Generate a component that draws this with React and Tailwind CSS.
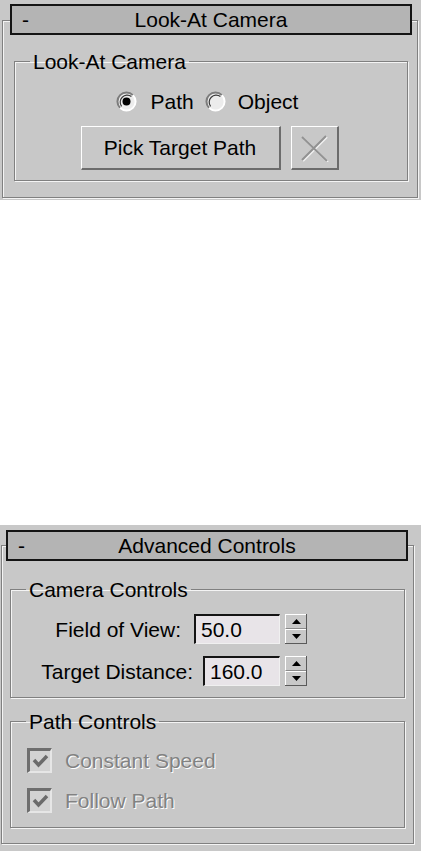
import React from "react";

const Header = ({ title, className }) => (
  <div
    className={`relative z-10 h-[31px] w-[402px] border-2 border-[#141414] bg-[#b4b4b4] grid grid-cols-[44px_1fr_44px] items-center ${className}`}
  >
    <span className="pl-[10px] leading-none">-</span>
    <span className="text-center leading-none">{title}</span>
    <span />
  </div>
);

const Group = ({ label, className, children }) => (
  <fieldset
    className={`border border-[#808080] shadow-[inset_1px_1px_0_#f4f4f4,1px_1px_0_#f4f4f4] ${className}`}
  >
    <legend className="ml-[15px] px-[3px] leading-[23px]">{label}</legend>
    {children}
  </fieldset>
);

const Radio = ({ checked }) => (
  <svg width="21" height="21" viewBox="0 0 21 21">
    <circle cx="10.5" cy="10.5" r="8.5" fill="#ececec" />
    <path d="M4.1 16.9 A9 9 0 0 1 16.9 4.1" fill="none" stroke="#7c7c7c" strokeWidth="2" />
    <path d="M5.6 15.4 A7 7 0 0 1 15.4 5.6" fill="none" stroke="#3a3a3a" strokeWidth="1.2" />
    <path d="M16.9 4.1 A9 9 0 0 1 4.1 16.9" fill="none" stroke="#ffffff" strokeWidth="2" />
    {checked && <circle cx="10.5" cy="10.5" r="4" fill="#000" />}
  </svg>
);

const Spinner = () => (
  <div className="w-[22px] h-[30px] flex flex-col border-r border-b border-[#5a5a5a]">
    <div className="flex-1 flex items-center justify-center border-t border-l border-t-white border-l-white border-b border-b-[#8a8a8a]">
      <svg width="9" height="5" viewBox="0 0 9 5">
        <path d="M4.5 0 L9 5 L0 5 Z" fill="#000" />
      </svg>
    </div>
    <div className="flex-1 flex items-center justify-center border-l border-l-white border-t border-t-white">
      <svg width="9" height="5" viewBox="0 0 9 5">
        <path d="M0 0 L9 0 L4.5 5 Z" fill="#000" />
      </svg>
    </div>
  </div>
);

const SpinRow = ({ label, value, inputW, gap }) => (
  <div className="flex items-center justify-end pr-[97px]">
    <span className="leading-none">{label}</span>
    <div
      className={`h-[30px] ${inputW} ${gap} flex items-center pl-[5px] bg-[#e8e4e8] border-t-2 border-l-2 border-t-[#141414] border-l-[#141414] border-b border-r border-b-[#f0f0f0] border-r-[#f0f0f0] leading-none`}
    >
      {value}
    </div>
    <div className="ml-[5px]">
      <Spinner />
    </div>
  </div>
);

const CheckRow = ({ label }) => (
  <div className="flex items-center h-[25px] pl-[16px]">
    <div className="w-[25px] h-[25px] flex items-center justify-center bg-[#d2d2d2] border-t-[3px] border-l-[3px] border-t-[#6e6e6e] border-l-[#6e6e6e] border-b-2 border-r-2 border-b-[#e6e6e6] border-r-[#e6e6e6]">
      <svg width="17" height="15" viewBox="0 0 17 15">
        <path d="M2 6 L6.5 11 L15 2" fill="none" stroke="#6a6a6a" strokeWidth="3.5" />
      </svg>
    </div>
    <span className="ml-[13px] leading-none text-[#828282] [text-shadow:1px_1px_0_#ffffff]">
      {label}
    </span>
  </div>
);

export default function App() {
  return (
    <div className="w-[421px] h-[851px] bg-white font-['Liberation_Sans',Arial,sans-serif] text-[21px] text-black">
      {/* Look-At Camera rollout */}
      <div className="h-[200px] bg-[#c8c8c8] pt-[4px]">
        <Header title="Look-At Camera" className="ml-[10px]" />
        <div className="ml-[2px] mt-[-15px] w-[416px] h-[178px] border border-[#808080] shadow-[inset_1px_1px_0_#f4f4f4,1px_1px_0_#f4f4f4] pt-[29px] pl-[11px]">
          <Group label="Look-At Camera" className="w-[394px] pb-[10px]">
            <div className="flex items-center justify-center h-[24px] mt-[16px] pr-[8px]">
              <Radio checked />
              <span className="ml-[14px] leading-none">Path</span>
              <span className="ml-[11px] flex">
                <Radio />
              </span>
              <span className="ml-[12px] leading-none">Object</span>
            </div>
            <div className="flex justify-center gap-[10px] mt-[13px] pr-[3px]">
              <div className="w-[200px] h-[44px] flex items-center justify-center border-t border-l border-t-white border-l-white border-r-2 border-b-2 border-r-[#6c6c6c] border-b-[#6c6c6c] leading-none">
                Pick Target Path
              </div>
              <div className="w-[48px] h-[44px] flex items-center justify-center border-t border-l border-t-white border-l-white border-r-2 border-b-2 border-r-[#6c6c6c] border-b-[#6c6c6c]">
                <svg width="30" height="28" viewBox="0 0 30 28">
                  <path d="M3 3 L28 27 M27 2 L3 26" stroke="#f2f2f2" strokeWidth="2" transform="translate(1 1)" />
                  <path d="M3 3 L28 27 M27 2 L3 26" stroke="#929292" strokeWidth="2" />
                </svg>
              </div>
            </div>
          </Group>
        </div>
      </div>

      <div className="h-[325px]" />

      {/* Advanced Controls rollout */}
      <div className="h-[326px] bg-[#c8c8c8] pt-[5px]">
        <Header title="Advanced Controls" className="ml-[6px]" />
        <div className="ml-[1px] mt-[-16px] w-[413px] h-[299px] border border-[#808080] shadow-[inset_1px_1px_0_#f4f4f4,1px_1px_0_#f4f4f4] pt-[32px] pl-[8px]">
          <Group label="Camera Controls" className="w-[395px] pb-[11px]">
            <div className="flex flex-col gap-[12px] mt-[13px]">
              <SpinRow label="Field of View:" value="50.0" inputW="w-[86px]" gap="ml-[13px]" />
              <SpinRow label="Target Distance:" value="160.0" inputW="w-[77px]" gap="ml-[10px]" />
            </div>
          </Group>
          <Group label="Path Controls" className="w-[395px] mt-[12px] pb-[14px]">
            <div className="flex flex-col gap-[15px] mt-[15px]">
              <CheckRow label="Constant Speed" />
              <CheckRow label="Follow Path" />
            </div>
          </Group>
        </div>
      </div>
    </div>
  );
}
